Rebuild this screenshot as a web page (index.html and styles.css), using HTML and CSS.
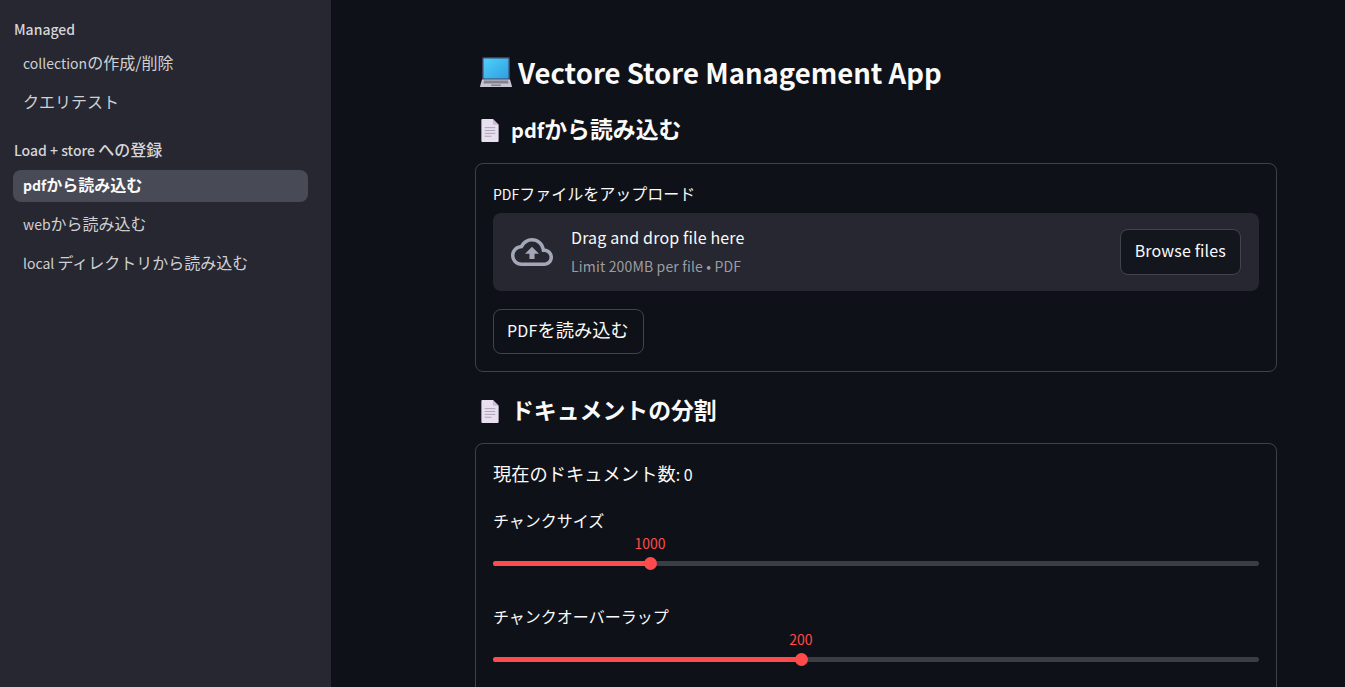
FILE: index.html
```html
<!DOCTYPE html>
<html lang="ja">
<head>
<meta charset="utf-8">
<title>Vectore Store Management App</title>
<link rel="stylesheet" href="styles.css">
</head>
<body>
<div class="app">
  <aside class="sidebar">
    <div class="nav-head">Managed</div>
    <a class="nav-item">collection<span class="ja">の作成/削除</span></a>
    <a class="nav-item"><span class="ja">クエリテスト</span></a>
    <div class="nav-head second">Load + store <span class="ja">への登録</span></div>
    <a class="nav-item active">pdf<span class="ja">から読み込む</span></a>
    <a class="nav-item">web<span class="ja">から読み込む</span></a>
    <a class="nav-item">local <span class="ja">ディレクトリから読み込む</span></a>
  </aside>
  <main class="main">
    <h1 class="title">
      <svg class="emoji-laptop" viewBox="0 0 32 32" aria-hidden="true">
        <defs><linearGradient id="scr" x1="0" y1="0" x2="1" y2="1"><stop offset="0" stop-color="#4fd0fb"/><stop offset="1" stop-color="#2f9fe0"/></linearGradient></defs>
        <path d="M3.5 1h25A1.500 1.500 0 0 1 30 2.500V24H2V2.500A1.500 1.500 0 0 1 3.500 1z" fill="#3f3d5e"/>
        <rect x="3.500" y="2.500" width="25" height="20" fill="url(#scr)"/>
        <path d="M2 23.500h28l2 7a.6.6 0 0 1-.6.6H.6a.6.6 0 0 1-.6-.6z" fill="#c9c5d3"/>
        <path d="M4 24.500h24l.5 3H3.500z" fill="#85828f"/>
        <rect x="11" y="28.500" width="10" height="1.500" fill="#85828f"/>
      </svg>
      <span>Vectore Store Management App</span>
    </h1>
    <h2 class="heading">
      <svg class="emoji-page" viewBox="0 0 18 24" aria-hidden="true">
        <path d="M1 0h11l6 6v17a1 1 0 0 1-1 1H1a1 1 0 0 1-1-1V1a1 1 0 0 1 1-1z" fill="#e8dff0"/>
        <path d="M12 0l6 6h-5a1 1 0 0 1-1-1z" fill="#c7bcd3"/>
        <path d="M3.500 9h11M3.500 12h11M3.500 15h11M3.500 18h7" stroke="#a9a3b3" stroke-width="1"/>
      </svg>
      <span>pdf<span class="ja">から読み込む</span></span>
    </h2>
    <section class="card">
      <div class="field-label">PDF<span class="ja">ファイルをアップロード</span></div>
      <div class="dropzone">
        <svg class="cloud" viewBox="0 0 24 24" aria-hidden="true"><path d="M19.35 10.04C18.67 6.59 15.64 4 12 4 9.11 4 6.6 5.64 5.35 8.04 2.34 8.36 0 10.91 0 14c0 3.31 2.69 6 6 6h13c2.76 0 5-2.24 5-5 0-2.64-2.05-4.78-4.65-4.96zM19 18H6c-2.21 0-4-1.79-4-4 0-2.05 1.53-3.76 3.56-3.97l1.07-.11.5-.95C8.08 7.14 9.94 6 12 6c2.62 0 4.88 1.86 5.39 4.43l.3 1.5 1.53.11c1.56.1 2.78 1.41 2.78 2.96 0 1.65-1.35 3-3 3zM8 13h2.55v3h2.9v-3H16l-4-4z"/></svg>
        <div class="drop-text">
          <div class="drop-main">Drag and drop file here</div>
          <div class="drop-sub">Limit 200MB per file • PDF</div>
        </div>
        <button class="btn browse">Browse files</button>
      </div>
      <button class="btn load">PDF<span class="ja">を読み込む</span></button>
    </section>
    <h2 class="heading">
      <svg class="emoji-page" viewBox="0 0 18 24" aria-hidden="true">
        <path d="M1 0h11l6 6v17a1 1 0 0 1-1 1H1a1 1 0 0 1-1-1V1a1 1 0 0 1 1-1z" fill="#e8dff0"/>
        <path d="M12 0l6 6h-5a1 1 0 0 1-1-1z" fill="#c7bcd3"/>
        <path d="M3.500 9h11M3.500 12h11M3.500 15h11M3.500 18h7" stroke="#a9a3b3" stroke-width="1"/>
      </svg>
      <span><span class="ja">ドキュメントの分割</span></span>
    </h2>
    <section class="card card-open">
      <p class="count"><span class="ja">現在のドキュメント数</span>: 0</p>
      <div class="slider">
        <div class="field-label"><span class="ja">チャンクサイズ</span></div>
        <div class="slider-body">
          <div class="track"><div class="fill" style="width:20.5%"><span class="value">1000</span><span class="thumb"></span></div></div>
        </div>
      </div>
      <div class="slider">
        <div class="field-label"><span class="ja">チャンクオーバーラップ</span></div>
        <div class="slider-body">
          <div class="track"><div class="fill" style="width:40.2%"><span class="value">200</span><span class="thumb"></span></div></div>
        </div>
      </div>
    </section>
  </main>
</div>
</body>
</html>
```
FILE: styles.css
```css
* { box-sizing: border-box; }
html, body { margin: 0; height: 100%; overflow: hidden; }
body {
  font-family: "Noto Sans CJK JP", "Noto Sans", sans-serif;
  color: #fafafa;
  background: #0e1117;
}
.ja { font-size: 1.143em; line-height: 1; letter-spacing: 0; }
.app { display: flex; height: 687px; overflow: hidden; }
.sidebar {
  width: 331px;
  flex: none;
  background: #262730;
  padding: 18px 23px 0 13px;
  display: flex;
  flex-direction: column;
}
.nav-head {
  font-size: 14px;
  line-height: 22px;
  font-weight: 500;
  color: #d5d5d8;
  padding-left: 1px;
  margin-bottom: 8px;
}
.nav-head.second { margin-top: 13px; margin-bottom: 9px; }
.nav-item {
  display: block;
  height: 32px;
  line-height: 30px;
  padding-left: 10px;
  margin-bottom: 7px;
  border-radius: 8px;
  font-size: 14px;
  color: #d0d0d3;
  white-space: nowrap;
}
.nav-item.active { background: #484a55; color: #fafafa; font-weight: 700; }
.main { flex: 1; min-width: 0; padding: 48px 68px 0 144px; }
.title {
  margin: 0 0 0 5px;
  display: flex;
  align-items: center;
  gap: 6px;
  height: 48px;
  font-size: 27.5px;
  font-weight: 600;
  line-height: 48px;
  white-space: nowrap;
}
.emoji-laptop { width: 32px; height: 32px; flex: none; }
.heading {
  margin: 16px 0 15px 6px;
  display: flex;
  align-items: center;
  gap: 12px;
  height: 36px;
  font-size: 20px;
  font-weight: 600;
  line-height: 36px;
  white-space: nowrap;
}
.card + .heading { margin-top: 21px; margin-bottom: 14px; }
.emoji-page { width: 18px; height: 23px; flex: none; }
.card {
  width: 802px;
  border: 1px solid #3f4147;
  border-radius: 8px;
  padding: 17px;
  margin-bottom: 21px;
}
.card-open { padding-bottom: 60px; margin-bottom: 0; }
.field-label { font-size: 14px; line-height: 22px; margin-top: 2px; }
.dropzone {
  margin-top: 8px;
  height: 78px;
  background: #262730;
  border-radius: 8px;
  display: flex;
  align-items: center;
  padding: 0 18px;
}
.cloud { width: 42px; height: 42px; flex: none; fill: #a3a8b8; }
.drop-text { flex: 1; margin: 0 0 3px 18px; letter-spacing: .01em; }
.drop-main { font-size: 16px; line-height: 24px; }
.drop-sub { font-size: 14px; line-height: 22px; margin-top: 6px; color: #9c9da3; }
.btn {
  font-family: inherit;
  font-size: 16px;
  letter-spacing: .01em;
  color: #fafafa;
  background: #13161d;
  border: 1px solid #41444c;
  border-radius: 8px;
  padding: 0 14px 4px;
  height: 46px;
  white-space: nowrap;
}
.load {
  display: block;
  margin-top: 18px;
  height: 45px;
  padding-left: 13px;
  padding-right: 14px;
  background: #0e1117;
}
.count { margin: -1px 0 22px; font-size: 16px; line-height: 28px; }
.slider { margin-bottom: 28px; }
.slider-body { height: 46px; display: flex; align-items: flex-end; padding-bottom: 12px; }
.track { width: 100%; height: 5px; border-radius: 3px; background: #3b3d45; }
.fill { position: relative; height: 100%; border-radius: 3px; background: #ff4b4b; }
.thumb {
  position: absolute; right: -7px; top: -4px;
  width: 13px; height: 13px; border-radius: 50%; background: #ff4b4b;
}
.value {
  position: absolute; right: -16px; top: -28.5px;
  width: 32px; text-align: center;
  font-size: 14px; line-height: 20px; color: #ff4b4b;
}
```
